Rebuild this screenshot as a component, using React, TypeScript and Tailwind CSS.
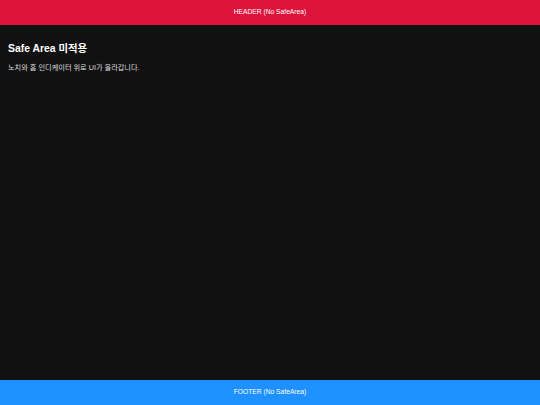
export default function App() {
  return (
    <div className="flex h-screen w-full flex-col bg-[#111111] font-['Liberation_Sans','Noto_Sans_CJK_KR',sans-serif] text-white">
      {/* header, no safe area inset */}
      <header className="flex h-[25px] shrink-0 items-center justify-center bg-[#dc143c] text-[6.7px]">
        HEADER (No SafeArea)
      </header>

      <main className="flex-1 px-[8px] pt-[18px]">
        <h1 className="text-[10.4px] leading-[12px] font-bold">Safe Area 미적용</h1>
        <p className="mt-[9px] text-[7.2px] leading-[8px] text-[#dddddd]">
          노치와 홈 인디케이터 위로 UI가 올라갑니다.
        </p>
      </main>

      <footer className="flex h-[25px] shrink-0 items-center justify-center bg-[#1e90ff] text-[6.7px]">
        FOOTER (No SafeArea)
      </footer>
    </div>
  )
}
